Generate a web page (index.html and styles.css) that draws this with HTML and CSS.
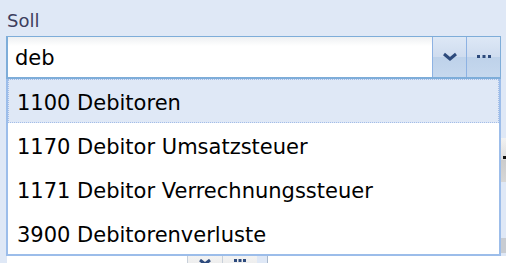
FILE: index.html
```html
<!DOCTYPE html>
<html>
<head>
<title>Buchung</title>
<meta http-equiv="content-type" content="text/html; charset=utf-8" />
<link rel="stylesheet" href="styles.css">
</head>
<body>
<div class="form">
	<div class="label">Soll</div>
	<div class="combo">
		<div class="combo-input">deb</div>
		<div class="combo-btn">
			<svg width="16" height="10" viewBox="0 0 16 10"><path d="M2 2 L8 7 L14 2" fill="none" stroke="#2d4a7c" stroke-width="3"/></svg>
		</div>
		<div class="combo-btn">
			<svg width="16" height="4" viewBox="0 0 16 4"><rect x="1" y="0" width="3" height="3" fill="#2d4a7c"/><rect x="6.5" y="0" width="3" height="3" fill="#2d4a7c"/><rect x="12" y="0" width="3" height="3" fill="#2d4a7c"/></svg>
		</div>
	</div>

	<!-- fields below, mostly covered by the open list -->
	<div class="under under-mid">
		<div class="under-field"></div>
		<div class="under-btn"><span class="dot"></span></div>
	</div>
	<div class="under under-bar"></div>
	<div class="under under-bottom">
		<div class="cur-field">CHF</div>
		<div class="small-btn">
			<svg width="14" height="8" viewBox="0 0 14 8"><path d="M2 1 L7 5 L12 1" fill="none" stroke="#2d4a7c" stroke-width="3"/></svg>
		</div>
		<div class="small-btn">
			<svg width="14" height="3" viewBox="0 0 14 3"><rect x="1" y="0" width="3" height="3" fill="#2d4a7c"/><rect x="5.5" y="0" width="3" height="3" fill="#2d4a7c"/><rect x="10" y="0" width="3" height="3" fill="#2d4a7c"/></svg>
		</div>
		<div class="gap"></div>
		<div class="amount-field"></div>
	</div>

	<div class="list">
		<div class="item selected">1100 Debitoren</div>
		<div class="item">1170 Debitor Umsatzsteuer</div>
		<div class="item">1171 Debitor Verrechnungssteuer</div>
		<div class="item">3900 Debitorenverluste</div>
	</div>
</div>
</body>
</html>
```

FILE: styles.css
```css
body {margin: 0; background-color: #dfe8f6; font-family: "DejaVu Sans", sans-serif; overflow: hidden;}
.form {position: relative; padding: 6px 0 0 6px;}
.label {font-size: 18px; color: #3e3e5e; height: 30px; line-height: 30px; padding-left: 1px;}
.combo {display: flex; width: 495px; height: 43px; box-sizing: border-box; border: 1px solid #7eadd9; border-left-width: 2px; border-bottom-width: 2px;}
.combo-input {flex: 1; background: linear-gradient(#eef0f2, #ffffff 9px); font-size: 21px; color: #000; line-height: 40px; padding-top: 1px; padding-left: 7px;}
.combo-btn {width: 33px; display: flex; align-items: center; justify-content: center; border-left: 1px solid #8db2e3; background: linear-gradient(#dde8f6, #cfdcef 50%, #bed2ea 51%, #c6d8ee);}
.combo-btn:last-child {border-top-right-radius: 3px;}

.under {display: flex;}
.under-mid {margin-top: 59px; height: 44px; width: 500px;}
.under-field {flex: 1; background: #fff;}
.under-btn {width: 34px; display: flex; align-items: center; justify-content: flex-start; background: linear-gradient(#f2f2f2, #dcdcdc 50%, #cccccc 51%, #d6d6d6);}
.dot {width: 3px; height: 3px; background: #111; margin-left: 31px; margin-bottom: 6px;}
.under-bar {margin-top: 56px; height: 15px; width: 500px; background: #c8ccd2;}
.under-bottom {margin-top: 3px; height: 30px; width: 500px;}
.cur-field {width: 180px; margin-left: 1px; background: #fff; font-size: 21px; line-height: 30px; padding-left: 8px; box-sizing: border-box; padding-top: 4px;}
.small-btn {width: 34px; display: flex; align-items: flex-start; justify-content: center; padding-top: 3px; border-left: 1px solid #c8d0da; background: linear-gradient(#f3f3f3, #dedede);}
.gap {width: 10px; background: #dfe8f6;}
.amount-field {flex: 1; background: #fff; border-left: 1px solid #a8b8cc;}

.list {position: absolute; left: 6px; top: 79px; width: 495px; height: 177px; box-sizing: border-box; background: #fff; border: 2px solid #9cbdea; border-top: none;}
.item {height: 44px; box-sizing: border-box; font-size: 21px; color: #000; line-height: 44px; padding-top: 2px; padding-left: 9px; white-space: nowrap;}
.item.selected {background: #dfe8f6; border: 1px dotted #a3bde8; line-height: 42px; padding-left: 8px;}
```
